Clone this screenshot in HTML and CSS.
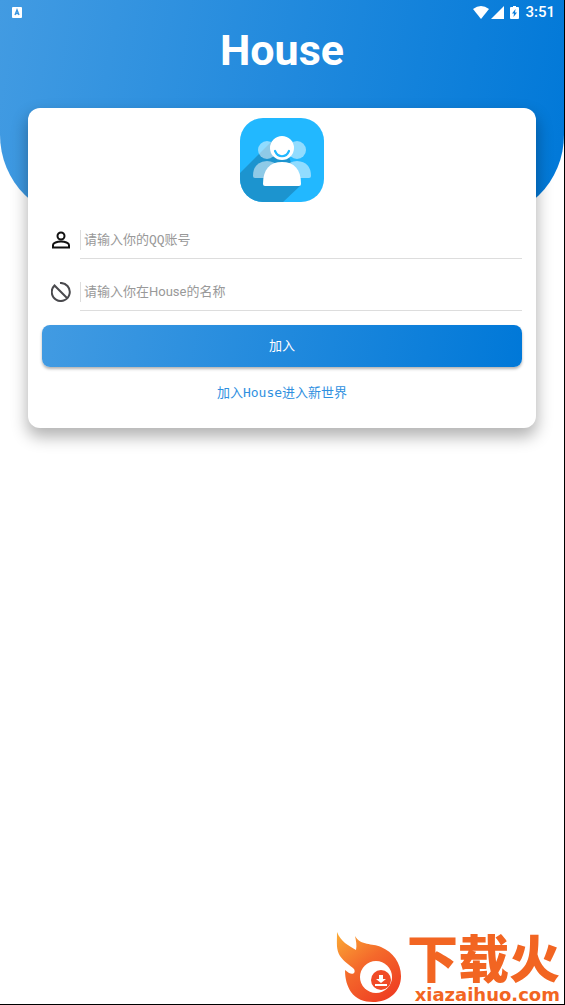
FILE: index.html
```html
<!DOCTYPE html>
<html lang="zh-CN">
<head>
    <meta charset="UTF-8">
    <meta name="viewport" content="width=device-width, initial-scale=1.0">
    <title>House</title>
    <link rel="stylesheet" href="styles.css">
</head>
<body>

    <header class="header">
        <div class="status-bar">
            <svg class="app-icon" width="10" height="11" viewBox="0 0 10 11">
                <rect width="10" height="11" rx="1" fill="#fff"/>
                <path d="M3 8L5 3L7 8M3.500 6.500H6.500" fill="none" stroke="#3c96df" stroke-width="1.400"/>
            </svg>
            <div class="status-icons">
                <svg width="16" height="13" viewBox="0 0 16 13">
                    <path d="M0 3Q8-3 16 3L8 13Z" fill="#fff"/>
                </svg>
                <svg width="13" height="13" viewBox="0 0 13 13">
                    <path d="M13 0V13H0Z" fill="#fff"/>
                </svg>
                <svg class="battery" width="9" height="13" viewBox="0 0 9 13">
                    <path d="M3 0H6V1H8Q9 1 9 2V12Q9 13 8 13H1Q0 13 0 12V2Q0 1 1 1H3Z" fill="#fff"/>
                    <path d="M5.500 3L2 7.500H4L3.500 11L7 6.500H5Z" fill="#0a7cda"/>
                </svg>
                <span class="clock">3:51</span>
            </div>
        </div>
        <h1>House</h1>
    </header>

    <main class="card">
        <svg class="logo" width="86" height="86" viewBox="0 0 86 86">
            <defs>
                <clipPath id="logoClip"><rect x="1" y="1" width="84" height="84" rx="23"/></clipPath>
            </defs>
            <g clip-path="url(#logoClip)">
                <rect width="86" height="86" fill="#22b8ff"/>
                <path d="M35 22L0 57V86H43L61 69L50 40Z" fill="#1c94cf"/>
                <g fill="#fff" fill-opacity="0.5">
                    <circle cx="28" cy="33" r="9"/>
                    <circle cx="58" cy="33" r="9"/>
                    <path d="M14 59Q14 45 28 44Q43 45 43 61H16Q14 61 14 59Z"/>
                    <path d="M43 61Q43 45 58 44Q72 45 72 59Q72 61 70 61Z"/>
                </g>
                <circle cx="43" cy="31" r="12" fill="#fff"/>
                <path d="M24 67C24 52 31 45 43 45S62 52 62 67Q62 69 60 69H26Q24 69 24 67Z" fill="#fff"/>
                <path d="M36 34C39 41 47 41 50 34" fill="none" stroke="#22b8ff" stroke-width="2.200" stroke-linecap="round"/>
            </g>
        </svg>

        <form class="login">
            <div class="field">
                <label for="qq" aria-label="QQ账号">
                    <svg width="20" height="20" viewBox="0 0 20 20" fill="none" stroke="#111" stroke-width="2">
                        <circle cx="10" cy="6" r="3.500"/>
                        <path d="M2 17.500V15C2 13 6 11.500 10 11.500S18 13 18 15V17.500Z"/>
                    </svg>
                </label>
                <input class="qq" type="text" id="qq" placeholder="请输入你的QQ账号">
            </div>
            <div class="field">
                <label for="nickname" aria-label="名称">
                    <svg width="20" height="20" viewBox="0 0 20 20" fill="none" stroke="#4a4a4e" stroke-width="2">
                        <path d="M9 1A9 9 0 1 1 3.500 3.500L16 16"/>
                    </svg>
                </label>
                <input type="text" id="nickname" placeholder="请输入你在House的名称">
            </div>
            <button type="submit">加入</button>
        </form>
        <a class="join-link" href="#">加入House进入新世界</a>
    </main>

    <footer class="watermark">
        <svg width="66" height="72" viewBox="0 0 66 72">
            <defs>
                <linearGradient id="flame" x1="0" y1="0" x2="0.700" y2="1">
                    <stop offset="0" stop-color="#fbab35"/>
                    <stop offset="0.500" stop-color="#f4692b"/>
                    <stop offset="1" stop-color="#ef4023"/>
                </linearGradient>
            </defs>
            <path d="M1 0C1 12 0 17 4 24C8 30 14 33 18 37C20 41 17 43 13 41L9 38C9 47 11 54 15 60C20 67 28 70 37 70C53 70 65 60 65 44C65 31 57 20 45 15C36 11 25 14 19 4C20 9 21 13 20 18C12 13 5 10 1 0Z" fill="url(#flame)"/>
            <circle cx="40" cy="45" r="16" fill="#fff"/>
            <circle cx="45" cy="48" r="10" fill="#f04a27"/>
            <path d="M43 43H47V47H50L45 51L40 47H43ZM39 52H51V54H39Z" fill="#fff"/>
        </svg>
        <div class="brand">
            <span class="brand-name">下载火</span>
            <span class="brand-url">xiazaihuo.com</span>
        </div>
    </footer>

</body>
</html>
```

FILE: styles.css
```css
* {
    box-sizing: border-box;
}
body {
    display: flex;
    flex-direction: column;
    min-height: 100vh;
    margin: 0;
    background: #fff;
    border-right: 1px solid #000;
    border-bottom: 1px solid #000;
    font-family: Roboto, "Noto Sans CJK SC", sans-serif;
}
.header {
    height: 220px;
    background: linear-gradient(100deg, #429be2, #0078d8);
    border-radius: 0 0 85px 85px;
    color: #fff;
}
.status-bar {
    display: flex;
    align-items: center;
    justify-content: space-between;
    height: 24px;
    padding: 0 9px 0 12px;
}
.status-icons {
    display: flex;
    align-items: center;
    gap: 2px;
}
.battery {
    margin: 0 4px;
}
.clock {
    font-size: 15px;
    font-weight: 500;
    line-height: 24px;
}
h1 {
    margin: 0;
    font-size: 43px;
    line-height: 53px;
    text-align: center;
}
.card {
    display: flex;
    flex-direction: column;
    align-items: center;
    margin: -112px 28px 0;
    padding: 9px 14px 25px;
    background: #fff;
    border-radius: 12px;
    box-shadow: 0 8px 16px 1px rgba(0, 0, 0, 0.3);
}
.logo {
    margin-bottom: 18px;
}
.login {
    width: 100%;
}
.field {
    display: flex;
    align-items: center;
    height: 38px;
    margin-bottom: 14px;
}
.field label {
    display: flex;
    width: 38px;
    padding-left: 9px;
}
.field input {
    flex: 1;
    min-width: 0;
    height: 38px;
    padding: 0 4px;
    border: none;
    border-bottom: 1px solid #ddd;
    background: linear-gradient(#ddd, #ddd) 0 9px / 1px 20px no-repeat;
    font-family: inherit;
    font-size: 13px;
    outline: none;
}
.field .qq {
    padding-top: 2px;
    font-family: "Liberation Mono", "Noto Sans CJK SC", monospace;
}
.field input::placeholder {
    color: #999;
    opacity: 1;
}
button {
    display: block;
    width: 100%;
    height: 42px;
    padding: 0 0 3px;
    border: none;
    border-radius: 8px;
    background: linear-gradient(100deg, #429be2, #0078d8);
    box-shadow: 0 2px 3px rgba(0, 0, 0, 0.3);
    color: #fff;
    font-family: inherit;
    font-size: 13px;
    cursor: pointer;
}
.join-link {
    margin-top: 16px;
    color: #3090df;
    font-family: "DejaVu Sans Mono", "Noto Sans CJK SC", monospace;
    font-size: 13px;
    line-height: 20px;
    text-decoration: none;
}
.watermark {
    display: flex;
    align-items: flex-end;
    justify-content: flex-end;
    gap: 5px;
    margin-top: auto;
    padding-right: 4px;
    color: #f26522;
}
.brand {
    display: flex;
    flex-direction: column;
    align-items: flex-end;
}
.brand-name {
    font-family: "Noto Sans CJK SC", sans-serif;
    font-size: 51px;
    font-weight: 900;
    line-height: 60px;
}
.brand-url {
    font-family: "DejaVu Sans", sans-serif;
    font-size: 18px;
    font-weight: bold;
    line-height: 18px;
}
```
